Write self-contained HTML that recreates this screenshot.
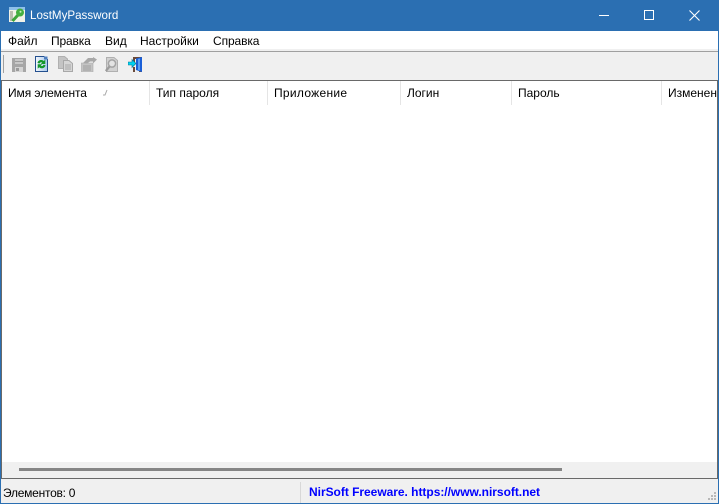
<!DOCTYPE html>
<html><head><meta charset="utf-8"><style>
html,body{margin:0;padding:0}
body{width:719px;height:504px;overflow:hidden;position:relative;background:#fff;font-family:"Liberation Sans",sans-serif;font-size:12px;color:#000}
.a{position:absolute}
.t{position:absolute;white-space:nowrap;line-height:14px}
</style></head><body>
<div class="a" style="left:0;top:0;width:719px;height:31px;background:#2b6fb2"></div>
<svg class="a" style="left:9px;top:7px" width="16" height="16" viewBox="0 0 16 16"><rect x="0" y="0" width="16" height="15" fill="#f2f2e8"/><rect x="0" y="0" width="16" height="3" fill="#8fc0ea"/><rect x="1" y="4" width="3" height="10" fill="#b8bcae"/><path d="M3.5 14 L9 8" stroke="#3da53a" stroke-width="3"/><circle cx="11" cy="5.5" r="4" fill="#45b040"/><circle cx="11.5" cy="4.8" r="1" fill="#c8eec0"/></svg>
<div class="t" style="left:30px;top:9px;color:#fff;font-size:11.6px">LostMyPassword</div>
<div class="a" style="left:599px;top:15px;width:10px;height:1px;background:#fff"></div>
<div class="a" style="left:644px;top:10px;width:8px;height:8px;border:1px solid #fff"></div>
<svg class="a" style="left:689px;top:10px" width="11" height="11"><path d="M0.5 0.5L10.5 10.5M10.5 0.5L0.5 10.5" stroke="#fff" stroke-width="1.1"/></svg>

<div class="a" style="left:0;top:31px;width:1px;height:473px;background:#2b6fb2"></div>
<div class="a" style="left:718px;top:31px;width:1px;height:473px;background:#2b6fb2"></div>
<div class="a" style="left:0;top:503px;width:719px;height:1px;background:#2b6fb2"></div>

<div class="t" style="left:8px;top:34px">Файл</div>
<div class="t" style="left:51px;top:34px;letter-spacing:-.15px">Правка</div>
<div class="t" style="left:105px;top:34px">Вид</div>
<div class="t" style="left:140px;top:34px">Настройки</div>
<div class="t" style="left:213px;top:34px;letter-spacing:-.1px">Справка</div>

<div class="a" style="left:1px;top:49px;width:717px;height:31px;background:#f0f0f0"></div>
<div class="a" style="left:1px;top:51px;width:717px;height:1px;background:#a0a0a0"></div>
<div class="a" style="left:3px;top:55px;width:1px;height:18px;background:#a0a0a0"></div>

<svg class="a" style="left:12px;top:58px" width="14" height="14"><path d="M0 0H14V14H0Z" fill="#a6a6a6"/><rect x="3" y="1" width="8" height="5" fill="#c8c8c8"/><rect x="3" y="3" width="8" height="1" fill="#9c9c9c"/><rect x="3" y="9" width="8" height="5" fill="#d4d4d4"/><rect x="4" y="10" width="3" height="3" fill="#9a9a9a"/></svg>
<svg class="a" style="left:35px;top:56px" width="13" height="16"><defs><linearGradient id="g"><stop offset="0" stop-color="#f4f8fc"/><stop offset="1" stop-color="#a8c8ec"/></linearGradient></defs><path d="M0.5 0.5H9L12.5 3.5V15.5H0.5Z" fill="url(#g)" stroke="#24508f"/><path d="M9 0.5H12.5V3.5H9Z" fill="#4f7fc0"/><path d="M2.5 7C3 3.8 7.2 3.2 8.8 5L10.3 3.6V8H5.8L7.2 6.6C6.2 5.8 4.8 6.2 4.6 7.5Z" fill="#13982a"/><path d="M10.5 9.3C10 12.5 5.8 13.1 4.2 11.3L2.7 12.7V8.3H7.2L5.8 9.7C6.8 10.5 8.2 10.1 8.4 8.8Z" fill="#13982a"/></svg>
<svg class="a" style="left:58px;top:56px" width="15" height="16"><path d="M0.5 0.5H6.5L9.5 3V12.5H0.5Z" fill="#c4c4c4" stroke="#b0b0b0"/><path d="M5.5 4.5H11L14.5 7.5V15.5H5.5Z" fill="#d6d6d6" stroke="#a8a8a8"/><path d="M7 9H13M7 11H13M7 13H13" stroke="#a8a8a8"/></svg>
<svg class="a" style="left:81px;top:57px" width="16" height="15"><path d="M0 6H12V15H0Z" fill="#c4c4c4" stroke="#aaa" stroke-width=".6"/><path d="M2 9H10M2 11H10M2 13H10" stroke="#a0a0a0"/><path d="M2 6L7 1H12V0L16 2.5L12 6.5V4.5H9L6 6.5Z" fill="#a8a8a8"/></svg>
<svg class="a" style="left:105px;top:57px" width="13" height="15"><path d="M1.5 0.5H9L12.5 3.5V14.5H1.5Z" fill="#d2d2d2" stroke="#b0b0b0"/><circle cx="7" cy="6.5" r="3.6" fill="#e4e4e4" stroke="#a4a4a4" stroke-width="1.5"/><path d="M4.5 9.5L0.8 14" stroke="#9c9c9c" stroke-width="2.2"/></svg>
<svg class="a" style="left:128px;top:57px" width="16" height="15"><path d="M5 0H14V15H11V2H7V6H5ZM5 10H7V15H5Z" fill="#6a4a3a"/><path d="M8 1.5L14 0V15L8 13Z" fill="#1a5fd8"/><path d="M10 2L12 1.5V13.5L10 13Z" fill="#5aa0f4"/><path d="M0 5H4V2.5L8 6.5L4 10.5V8H0Z" fill="#00d4f0" stroke="#0a7090" stroke-width=".6"/></svg>

<div class="a" style="left:1px;top:80px;width:717px;height:1px;background:#696969"></div>
<div class="a" style="left:1px;top:80px;width:1px;height:399px;background:#696969"></div>
<div class="a" style="left:717px;top:80px;width:1px;height:399px;background:#696969"></div>

<div class="a" style="left:149px;top:81px;width:1px;height:24px;background:#e5e5e5"></div>
<div class="a" style="left:267px;top:81px;width:1px;height:24px;background:#e5e5e5"></div>
<div class="a" style="left:400px;top:81px;width:1px;height:24px;background:#e5e5e5"></div>
<div class="a" style="left:511px;top:81px;width:1px;height:24px;background:#e5e5e5"></div>
<div class="a" style="left:661px;top:81px;width:1px;height:24px;background:#e5e5e5"></div>
<div class="t" style="left:8px;top:86px;letter-spacing:-.08px">Имя элемента</div>
<svg class="a" style="left:102px;top:89px" width="6" height="7"><path d="M1 6H3L5 1" stroke="#a8a8a8" fill="none"/></svg>
<div class="t" style="left:156px;top:86px">Тип пароля</div>
<div class="t" style="left:274px;top:86px;letter-spacing:.3px">Приложение</div>
<div class="t" style="left:407px;top:86px">Логин</div>
<div class="t" style="left:518px;top:86px">Пароль</div>
<div class="a" style="left:662px;top:81px;width:55px;height:24px;overflow:hidden"><div class="t" style="left:6px;top:5px">Изменен</div></div>

<div class="a" style="left:2px;top:462px;width:715px;height:16px;background:#f0f0f0"></div>
<div class="a" style="left:19px;top:468px;width:543px;height:3px;background:#858585"></div>
<div class="a" style="left:1px;top:478px;width:717px;height:1px;background:#696969"></div>

<div class="a" style="left:1px;top:479px;width:717px;height:24px;background:#f0f0f0"></div>
<div class="a" style="left:300px;top:482px;width:1px;height:21px;background:#d8d8d8"></div>
<div class="t" style="left:3px;top:486px;letter-spacing:-.25px">Элементов: 0</div>
<div class="t" style="left:309px;top:485px;font-weight:bold;color:#0000ff;letter-spacing:-.03px">NirSoft Freeware. https://www.nirsoft.net</div>
<svg class="a" style="left:708px;top:492px" width="10" height="10" fill="#b8b8b8"><rect x="6" y="0" width="2" height="2"/><rect x="3" y="3" width="2" height="2"/><rect x="6" y="3" width="2" height="2"/><rect x="0" y="6" width="2" height="2"/><rect x="3" y="6" width="2" height="2"/><rect x="6" y="6" width="2" height="2"/></svg>
</body></html>
